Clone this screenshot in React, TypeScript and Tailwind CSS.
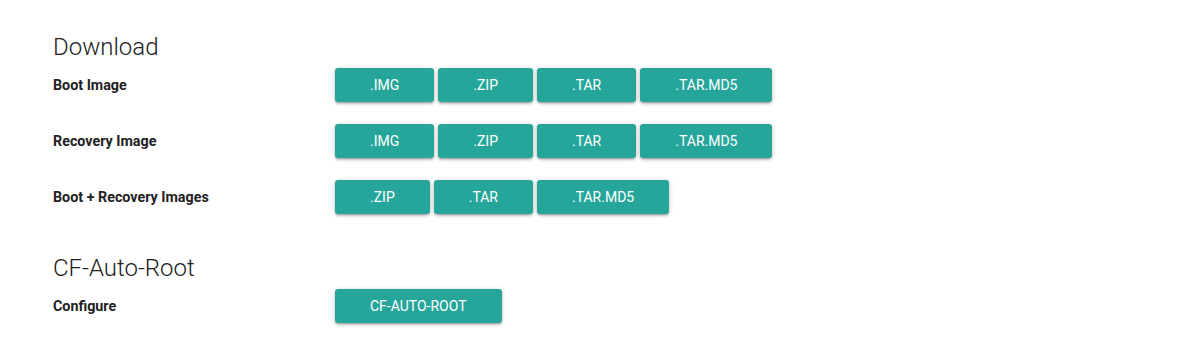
const sections = [
  {
    title: 'Download',
    rows: [
      { label: 'Boot Image', files: ['.IMG', '.ZIP', '.TAR', '.TAR.MD5'] },
      { label: 'Recovery Image', files: ['.IMG', '.ZIP', '.TAR', '.TAR.MD5'] },
      { label: 'Boot + Recovery Images', files: ['.ZIP', '.TAR', '.TAR.MD5'] },
    ],
  },
  {
    title: 'CF-Auto-Root',
    rows: [{ label: 'Configure', files: ['CF-AUTO-ROOT'] }],
  },
];

const Btn = ({ children }: { children: string }) => (
  <button className="h-[34px] px-[35px] rounded-[3px] bg-[#26a69a] text-white text-[14px] leading-[34px] shadow-[0_2px_2px_0_rgba(0,0,0,0.14),0_3px_1px_-2px_rgba(0,0,0,0.12),0_1px_5px_0_rgba(0,0,0,0.2)]">
    {children}
  </button>
);

export default function App() {
  return (
    <div className="w-[1200px] h-[347px] bg-white pl-[53px] pt-[30px] text-[#212121] font-['Roboto',sans-serif]">
      {sections.map((s, i) => (
        <section key={s.title} className={i > 0 ? 'mt-[37px]' : ''}>
          <h2 className="text-[24px] leading-[34px] font-light mb-[4px]">{s.title}</h2>
          <div className="flex flex-col gap-[22px]">
            {s.rows.map((r) => (
              <div key={r.label} className="flex items-center h-[34px]">
                <span className="w-[282px] text-[14.3px] font-bold pt-[2px]">{r.label}</span>
                <div className="flex gap-1">
                  {r.files.map((f) => (
                    <Btn key={f}>{f}</Btn>
                  ))}
                </div>
              </div>
            ))}
          </div>
        </section>
      ))}
    </div>
  );
}
